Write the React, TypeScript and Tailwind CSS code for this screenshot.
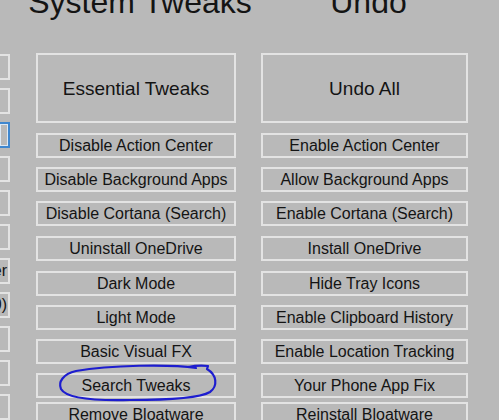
import React from "react";

const leftBoxes: { text?: string; active?: boolean }[] = [
  {},
  {},
  { active: true },
  {},
  {},
  {},
  { text: "Performance Timer" },
  { text: "Disable Telemetry (W10)" },
  {},
  {},
  {},
];

const middle = [
  "Disable Action Center",
  "Disable Background Apps",
  "Disable Cortana (Search)",
  "Uninstall OneDrive",
  "Dark Mode",
  "Light Mode",
  "Basic Visual FX",
  "Search Tweaks",
  "Remove Bloatware",
];

const right = [
  "Enable Action Center",
  "Allow Background Apps",
  "Enable Cortana (Search)",
  "Install OneDrive",
  "Hide Tray Icons",
  "Enable Clipboard History",
  "Enable Location Tracking",
  "Your Phone App Fix",
  "Reinstall Bloatware",
];

const gaps = [
  "mt-[10px]",
  "mt-[9px]",
  "mt-[9px]",
  "mt-[10px]",
  "mt-[10px]",
  "mt-[9px]",
  "mt-[9px]",
  "mt-[9px]",
  "mt-[4px]",
];

function SmallButton({ label, gap }: { label: string; gap: string }) {
  return (
    <div
      className={`${gap} h-[25px] shrink-0 border-2 border-[#e3e3e3] flex items-center justify-center text-[16px] leading-none text-[#141414] whitespace-nowrap`}
    >
      {label}
    </div>
  );
}

function Column({
  title,
  big,
  items,
  width,
}: {
  title: string;
  big: string;
  items: string[];
  width: string;
}) {
  return (
    <div className={`flex flex-col shrink-0 ${width}`}>
      <div className="mt-[-14px] mb-[35px] h-[32px] pl-[8px] flex justify-center text-[32px] leading-[32px] text-[#141414] whitespace-nowrap">
        <span>{title}</span>
      </div>
      <div className="h-[70px] shrink-0 border-2 border-[#e3e3e3] flex items-center justify-center text-[19px] leading-none text-[#141414]">
        {big}
      </div>
      <div className="flex flex-col">
        {items.map((t, i) => (
          <SmallButton key={t} label={t} gap={gaps[i]} />
        ))}
      </div>
    </div>
  );
}

export default function App() {
  return (
    <div
      className="relative w-[499px] h-[420px] overflow-hidden bg-[#b9b9b9] flex"
      style={{ fontFamily: '"Liberation Sans", Arial, sans-serif' }}
    >
      <div className="w-[10px] shrink-0 pt-[54px] flex flex-col gap-[8px]">
        {leftBoxes.map((b, i) => (
          <div
            key={i}
            className={
              b.active
                ? "h-[26px] w-[10px] shrink-0 border-y-2 border-r-2 border-[#3f87cf] shadow-[inset_0_0_0_1px_#dde8f3] flex items-center justify-end overflow-hidden whitespace-nowrap"
                : "h-[26px] w-[10px] shrink-0 border-y-2 border-r-2 border-[#e3e3e3] flex items-center justify-end overflow-hidden whitespace-nowrap"
            }
          >
            {b.text ? (
              <span className="pr-[1px] text-[16px] leading-none text-[#141414]">
                {b.text}
              </span>
            ) : null}
          </div>
        ))}
      </div>
      <div className="ml-[26px] flex items-start">
        <Column title="System Tweaks" big="Essential Tweaks" items={middle} width="w-[200px]" />
        <div className="ml-[25px]">
          <Column title="Undo" big="Undo All" items={right} width="w-[207px]" />
        </div>
      </div>
      <svg
        className="absolute left-0 top-0 pointer-events-none"
        width="499"
        height="420"
        viewBox="0 0 499 420"
      >
        <path
          d="M 196 368 C 170 364, 110 365, 76 371 C 63 374, 58 382, 61 389 C 66 398, 90 401, 130 400 C 170 400, 200 398, 210 392 C 218 386, 217 375, 207 369 L 208 366 C 200 365, 193 366, 188 367"
          fill="none"
          stroke="#1d1dcf"
          strokeWidth="2.2"
          strokeLinecap="round"
          strokeLinejoin="round"
        />
      </svg>
    </div>
  );
}
